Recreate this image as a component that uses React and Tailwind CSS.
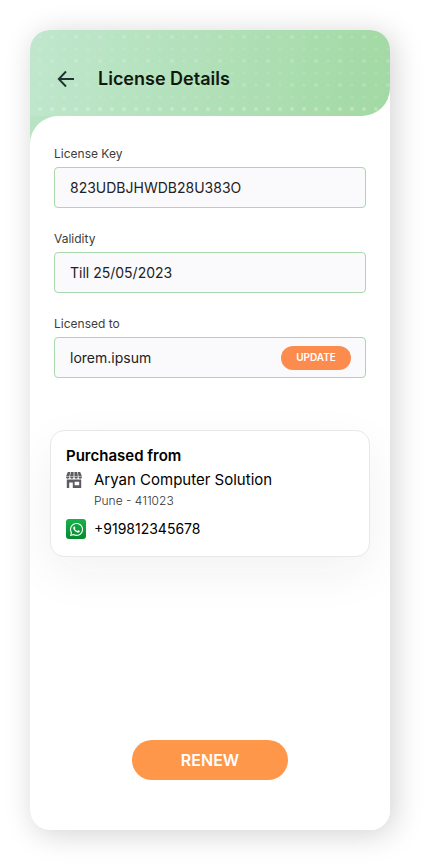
import { FaWhatsapp } from 'react-icons/fa'

function DotPattern() {
  return (
    <svg className="absolute inset-0 h-full w-full" aria-hidden="true">
      <defs>
        <pattern id="dots" width="24" height="24" patternUnits="userSpaceOnUse">
          <circle cx="10" cy="7" r="1.5" fill="#fff" fillOpacity="0.12" />
          <circle cx="22" cy="7" r="2" fill="#fff" fillOpacity="0.16" />
          <circle cx="10" cy="19" r="1.5" fill="#fff" fillOpacity="0.1" />
          <circle cx="22" cy="19" r="1.5" fill="#fff" fillOpacity="0.1" />
        </pattern>
        <pattern id="dots-row" width="12" height="14" patternUnits="userSpaceOnUse">
          <circle cx="10" cy="9" r="2" fill="#fff" fillOpacity="0.25" />
        </pattern>
      </defs>
      <rect width="100%" height="70" fill="url(#dots)" />
      <rect y="70" width="100%" height="14" fill="url(#dots-row)" />
    </svg>
  )
}

function BackIcon() {
  return (
    <svg width="18" height="18" viewBox="0 0 18 18" fill="none" stroke="#1f3430" strokeWidth="1.9" aria-hidden="true">
      <path d="M17 9H2M9 1.5 1.8 9 9 16.5" />
    </svg>
  )
}

function StoreIcon() {
  return (
    <svg width="16" height="16" viewBox="0 0 16 16" fill="#5b5b60" aria-hidden="true">
      <path d="M1.8 0h2.4l-.8 4.6H0zM4.9 0h2.7v4.6H4zM8.4 0h2.7l.9 4.6H8.4zM11.8 0h2.4L16 4.6h-3.4z" />
      <path d="M0 5.1h3.5a1.75 1.7 0 0 1-3.5 0zM4.1 5.1h3.5a1.75 1.7 0 0 1-3.5 0zM8.4 5.1h3.5a1.75 1.7 0 0 1-3.5 0zM12.5 5.1H16a1.75 1.7 0 0 1-3.5 0z" />
      <path
        fillRule="evenodd"
        d="M.8 7.4h14.4V16H6.8v-5.6H3.2V16H.8zM8.6 9.8v3.4h4.6V9.8z"
      />
    </svg>
  )
}

function Field({ id, label, value, children }) {
  return (
    <div>
      <label htmlFor={id} className="block text-xs leading-5 text-[#3c3c3c]">{label}</label>
      <div className="mt-[3px] flex h-[41px] items-center rounded border border-[#a8d8ab] bg-[#fafafd] px-[14px] py-2">
        <input
          id={id}
          defaultValue={value}
          className="ml-px min-w-0 flex-1 bg-transparent text-sm text-[#222222] outline-none"
        />
        {children}
      </div>
    </div>
  )
}

export default function App() {
  return (
    <div className="flex min-h-screen flex-col bg-white pt-[30px] pr-[38px] pb-[38px] pl-[30px] font-['Inter',sans-serif]">
      <div className="flex flex-1 flex-col overflow-hidden rounded-[20px] bg-white shadow-[4px_4px_30px_rgba(0,0,0,0.18)]">
        <header className="relative flex h-[86px] items-center overflow-hidden rounded-br-[28px] bg-linear-100 from-[#c0e7cd] to-[#a2d9a3] px-[27px] pt-3">
          <DotPattern />
          <button type="button" aria-label="Back" className="relative">
            <BackIcon />
          </button>
          <h1 className="relative ml-[23px] text-lg font-semibold text-[#10180f]">License Details</h1>
        </header>

        <div className="flex flex-1 flex-col bg-[linear-gradient(90deg,#b9e4c4_40px,#fff_40px)]">
          <main className="flex flex-1 flex-col rounded-tl-[28px] bg-white px-5 pt-7 pb-[50px]">
            <form className="flex flex-col gap-[21px] px-1" onSubmit={(e) => e.preventDefault()}>
              <Field id="key" label="License Key" value="823UDBJHWDB28U383O" />
              <Field id="validity" label="Validity" value="Till 25/05/2023" />
              <Field id="owner" label="Licensed to" value="lorem.ipsum">
                <button type="submit" className="h-6 w-[70px] rounded-full bg-[#fb8c4e] text-[10px] font-semibold text-white">
                  UPDATE
                </button>
              </Field>
            </form>

            <section className="mt-[52px] rounded-[14px] border border-[#e8e8ea] bg-white px-[15px] pt-[15px] pb-[17px] text-black shadow-[0_16px_48px_rgba(30,30,70,0.06)]">
              <h2 className="text-[15px] leading-5 font-semibold">Purchased from</h2>
              <div className="mt-1 flex gap-3">
                <div className="pt-[2px]">
                  <StoreIcon />
                </div>
                <div>
                  <p className="text-[15px] leading-5">Aryan Computer Solution</p>
                  <p className="mt-px text-xs leading-5 font-light text-[#333333]">Pune - 411023</p>
                </div>
              </div>
              <div className="mt-2 flex items-center gap-2">
                <span className="flex size-5 items-center justify-center rounded-[3px] bg-linear-to-b from-[#16b24a] to-[#07892f] text-white">
                  <FaWhatsapp size={15} />
                </span>
                <a href="tel:+919812345678" className="text-sm leading-5">+919812345678</a>
              </div>
            </section>

            <div className="mt-auto flex justify-center pt-10">
              <button type="button" className="h-10 w-[156px] rounded-full bg-[#ff974a] text-base font-semibold text-white">
                RENEW
              </button>
            </div>
          </main>
        </div>
      </div>
    </div>
  )
}
